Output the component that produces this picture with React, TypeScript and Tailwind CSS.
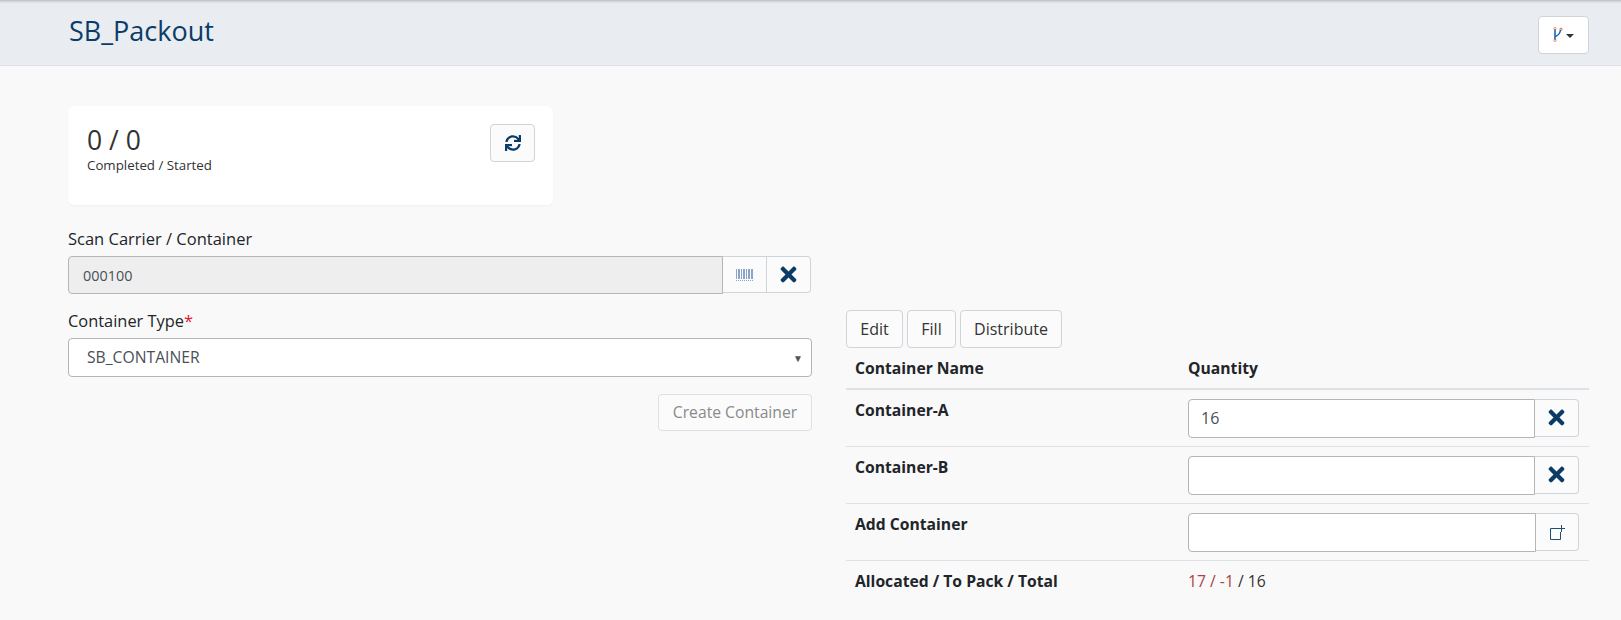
import { FaTimes, FaSync } from "react-icons/fa";

const FONT = "font-['Open_Sans',sans-serif]";

function BarcodeIcon() {
  return (
    <svg width="17" height="12" viewBox="0 0 17 12" className="text-[#8aa5c8]">
      {[0, 2, 3, 5, 7, 8, 10, 12, 13, 15, 16].map((x) => (
        <rect key={x} x={x} y="0" width="1" height="10" fill="currentColor" />
      ))}
      <path d="M0 11.5h17" stroke="currentColor" strokeDasharray="1 1" />
    </svg>
  );
}

function BranchIcon() {
  return (
    <svg width="10" height="15" viewBox="0 0 10 15" fill="none">
      <path d="M2 2v11" stroke="#1668b0" strokeWidth="1.6" />
      <path d="M2 9.5c3-1 5-2 5.5-6.5" stroke="#1668b0" strokeWidth="1.6" />
      <circle cx="2" cy="1.7" r="1.2" stroke="#c9825a" strokeWidth="0.8" />
      <circle cx="2" cy="13.3" r="1.2" stroke="#c9825a" strokeWidth="0.8" />
      <circle cx="8" cy="2.2" r="1.1" stroke="#c0504d" strokeWidth="0.8" />
    </svg>
  );
}

function AddBoxIcon() {
  return (
    <svg width="15" height="15" viewBox="0 0 15 15" fill="none" stroke="#1f4e79" strokeWidth="1">
      <path d="M8 3.5H0.5v11h10V7" />
      <path d="M11.5 0v7M8 3.5h7" />
    </svg>
  );
}

function QtyRow({ name, value, icon, narrow }: { name: string; value?: string; icon: React.ReactNode; narrow?: boolean }) {
  return (
    <div className="flex h-[57px] border-b border-[#dee2e6]">
      <div className="w-[342px] pl-[9px] pt-[8px] font-bold text-[#212529] leading-[24px]">{name}</div>
      <div className="flex flex-1 pt-[9px]">
        <div className={`h-[39px] ${narrow ? "w-[348px]" : "w-[347px]"} rounded-l-[4px] border border-[#b5b5b5] bg-white pl-[12px] text-[16px] leading-[37px] text-[#495057]`}>
          {value}
        </div>
        <div className={`flex h-[38px] ${narrow ? "w-[43px]" : "w-[44px]"} items-center justify-center rounded-r-[4px] border border-l-0 border-[#ced4da] bg-[#fbfbfb]`}>
          {icon}
        </div>
      </div>
    </div>
  );
}

export default function App() {
  return (
    <div className={`${FONT} h-[620px] overflow-hidden bg-[#f9f9f9] text-[16px] text-[#212529]`}>
      {/* Header */}
      <div className="flex h-[66px] items-center justify-between border-b border-[#dde1e7] bg-[#e9ecf1] pl-[69px] pr-[32px] shadow-[inset_0_4px_3px_-3px_rgba(0,0,0,0.25)]">
        <h1 className="-mt-[3px] text-[27px] leading-[32px] text-[#0b3c68]">SB_Packout</h1>
        <button className="mt-[4px] flex h-[38px] w-[51px] items-center justify-center gap-[3px] rounded-[4px] border border-[#ced4da] bg-white">
          <BranchIcon />
          <span className="mt-[3px] h-0 w-0 border-x-[4px] border-t-[4px] border-x-transparent border-t-[#333]" />
        </button>
      </div>

      <div className="flex items-start gap-[34px] pl-[68px] pr-[32px]">
        {/* Left column */}
        <div className="w-[744px] pt-[40px]">
          <div className="flex h-[99px] w-[485px] items-start justify-between rounded-[6px] bg-white pl-[19px] pr-[18px] pt-[18px] shadow-[0_1px_2px_rgba(0,0,0,0.04)]">
            <div>
              <div className="text-[26.5px] leading-[32px] text-[#333]">0 / 0</div>
              <div className="text-[13.3px] leading-[18px] text-[#333]">Completed / Started</div>
            </div>
            <button className="flex h-[38px] w-[45px] items-center justify-center rounded-[4px] border border-[#ced4da] bg-[#fbfbfb]">
              <FaSync className="text-[16px] text-[#0b3c68]" />
            </button>
          </div>

          <label className="mt-[22px] block text-[16.5px] leading-[24px]">Scan Carrier / Container</label>
          <div className="mt-[5px] flex">
            <div className="h-[38px] w-[655px] rounded-l-[4px] border border-[#b5b5b5] bg-[#eeeeee] pl-[14px] text-[14.4px] leading-[37px] text-[#495057]">
              000100
            </div>
            <div className="flex h-[37px] w-[44px] items-center justify-center border-y border-r border-[#ced4da] bg-[#fbfbfb]">
              <BarcodeIcon />
            </div>
            <div className="flex h-[37px] w-[44px] items-center justify-center rounded-r-[4px] border-y border-r border-[#ced4da] bg-[#fbfbfb]">
              <FaTimes className="text-[23px] text-[#0b3c68]" />
            </div>
          </div>

          <label className="mt-[15px] block text-[16.4px] leading-[24px]">
            Container Type<span className="text-[#e8112d]">*</span>
          </label>
          <div className="mt-[5px] flex h-[39px] items-center justify-between rounded-[4px] border border-[#b5b5b5] bg-white pl-[18px] pr-[8px] text-[15.7px] text-[#495057]">
            <span className="mt-[1px]">SB_CONTAINER</span>
            <span className="text-[10px] leading-none text-[#555]">▼</span>
          </div>

          <div className="mt-[17px] flex justify-end">
            <button className="h-[37px] w-[154px] rounded-[4px] border border-[#dde0e4] bg-[#fbfbfb] text-[15.7px] text-[#8a8a8a]">
              Create Container
            </button>
          </div>
        </div>

        {/* Right column */}
        <div className="flex-1 pt-[244px]">
          <div className="flex gap-[4px] text-[16px] text-[#333]">
            <button className="h-[38px] w-[57px] rounded-[4px] border border-[#ced4da] bg-[#fbfbfb]">Edit</button>
            <button className="h-[38px] w-[49px] rounded-[4px] border border-[#ced4da] bg-[#fbfbfb]">Fill</button>
            <button className="h-[38px] w-[102px] rounded-[4px] border border-[#ced4da] bg-[#fbfbfb]">Distribute</button>
          </div>
          <div className="text-[15.7px]">
            <div className="flex h-[42px] items-center border-b-2 border-[#dee2e6] pt-[1px] font-bold">
              <div className="w-[342px] pl-[9px]">Container Name</div>
              <div>Quantity</div>
            </div>
            <QtyRow name="Container-A" value="16" icon={<FaTimes className="-mt-[2px] text-[23px] text-[#0b3c68]" />} />
            <QtyRow name="Container-B" icon={<FaTimes className="-mt-[2px] text-[23px] text-[#0b3c68]" />} />
            <QtyRow name="Add Container" narrow icon={<AddBoxIcon />} />
            <div className="flex pt-[8px] leading-[24px]">
              <div className="w-[342px] pl-[9px] font-bold">Allocated / To Pack / Total</div>
              <div className="text-[#333]">
                <span className="text-[#a94442]">17 / -1</span> / 16
              </div>
            </div>
          </div>
        </div>
      </div>
    </div>
  );
}
